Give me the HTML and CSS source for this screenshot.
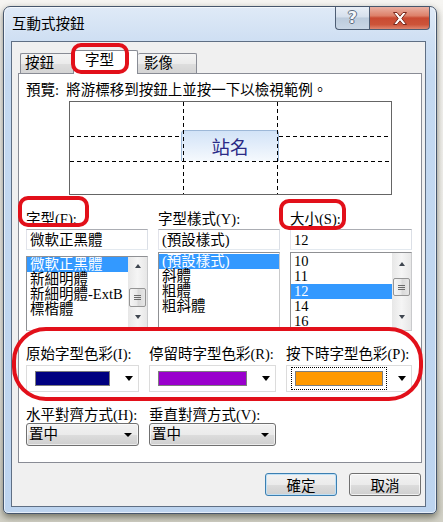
FILE: index.html
```html
<!DOCTYPE html>
<html lang="zh-Hant">
<head>
<meta charset="utf-8">
<title>互動式按鈕</title>
<link rel="stylesheet" href="styles.css">
</head>
<body>
<div class="window">
  <div class="titlebar">
    <span class="title">互動式按鈕</span>
    <div class="caps">
      <div class="cap cap-help"><span>?</span></div>
      <div class="cap cap-close">
        <svg width="16" height="13" viewBox="0 0 16 13"><polygon points="1.5,0.5 5,0.5 8,4.2 11,0.5 14.5,0.5 9.8,6.5 14.5,12.5 11,12.5 8,8.8 5,12.5 1.5,12.5 6.2,6.5" fill="#fff" stroke="#7a2a1e" stroke-width="1" stroke-linejoin="round"/></svg>
      </div>
    </div>
  </div>
  <div class="client">
    <div class="tabs">
      <div class="tab tab-1">按鈕</div>
      <div class="tab tab-2">字型</div>
      <div class="tab tab-3">影像</div>
    </div>
    <div class="panel">
      <div class="preview-text">預覽:&nbsp;&nbsp;將游標移到按鈕上並按一下以檢視範例。</div>
      <div class="preview">
        <div class="sample">站名</div>
        <svg class="guides" width="321" height="92" viewBox="0 0 321 92">
          <g stroke="#000" stroke-width="1" stroke-dasharray="4 3" fill="none">
            <line x1="113.5" y1="0" x2="113.5" y2="92"/>
            <line x1="207.5" y1="0" x2="207.5" y2="92"/>
            <line x1="0" y1="34.5" x2="111" y2="34.5"/>
            <line x1="209" y1="34.5" x2="321" y2="34.5"/>
            <line x1="0" y1="59.5" x2="321" y2="59.5"/>
          </g>
        </svg>
      </div>

      <div class="font-grid">
        <div class="field">
          <div class="lbl">字型(F):</div>
          <div class="tb">微軟正黑體</div>
          <div class="lb lb-font">
            <div class="items">
              <div class="item sel">微軟正黑體</div>
              <div class="item">新細明體</div>
              <div class="item">新細明體-ExtB</div>
              <div class="item">標楷體</div>
            </div>
            <div class="vscroll vs-font">
              <span class="arr arr-up"></span>
              <span class="thumb"></span>
              <span class="arr arr-down"></span>
            </div>
          </div>
        </div>
        <div class="field">
          <div class="lbl">字型樣式(Y):</div>
          <div class="tb">(預設樣式)</div>
          <div class="lb">
            <div class="items">
              <div class="item sel">(預設樣式)</div>
              <div class="item">斜體</div>
              <div class="item">粗體</div>
              <div class="item">粗斜體</div>
            </div>
          </div>
        </div>
        <div class="field">
          <div class="lbl">大小(S):</div>
          <div class="tb">12</div>
          <div class="lb">
            <div class="items">
              <div class="item">10</div>
              <div class="item">11</div>
              <div class="item sel">12</div>
              <div class="item">14</div>
              <div class="item">16</div>
            </div>
            <div class="vscroll vs-size">
              <span class="arr arr-up"></span>
              <span class="thumb"></span>
              <span class="arr arr-down"></span>
            </div>
          </div>
        </div>
      </div>

      <div class="color-grid">
        <div class="field">
          <div class="lbl">原始字型色彩(I):</div>
          <div class="ccombo"><span class="swatch sw-navy"></span><span class="dd-arrow"></span></div>
        </div>
        <div class="field">
          <div class="lbl">停留時字型色彩(R):</div>
          <div class="ccombo"><span class="swatch sw-purple"></span><span class="dd-arrow"></span></div>
        </div>
        <div class="field">
          <div class="lbl">按下時字型色彩(P):</div>
          <div class="ccombo"><span class="swatch sw-orange focus"></span><span class="dd-arrow"></span></div>
        </div>
      </div>

      <div class="align-grid">
        <div class="field">
          <div class="lbl">水平對齊方式(H):</div>
          <div class="dd"><span class="dd-text">置中</span><span class="dd-arrow small"></span></div>
        </div>
        <div class="field">
          <div class="lbl">垂直對齊方式(V):</div>
          <div class="dd"><span class="dd-text">置中</span><span class="dd-arrow small"></span></div>
        </div>
      </div>
    </div>
    <div class="btns">
      <div class="btn btn-default">確定</div>
      <div class="btn">取消</div>
    </div>
  </div>
</div>

<div class="mark mark-tab"></div>
<div class="mark mark-font"></div>
<div class="mark mark-size"></div>
<div class="mark mark-color"></div>
</body>
</html>
```

FILE: styles.css
```css
* { box-sizing: border-box; margin: 0; padding: 0; }
html, body { width: 443px; height: 522px; }
body {
  overflow: hidden;
  position: relative;
  background: linear-gradient(180deg, #f6f5f2 0%, #eeede8 70%, #d2d1c6 100%);
  font-family: "Liberation Serif", "Noto Sans CJK TC", serif;
  font-size: 14.5px;
  color: #000;
}

/* ---------- window frame ---------- */
.window {
  margin: 6px 0 0 3px;
  width: 434px;
  height: 508px;
  border: 1px solid #46566c;
  border-radius: 7px 7px 5px 5px;
  background: linear-gradient(180deg, #dfeaf7 0px, #d0e0f3 30px, #c4d9f1 70px, #bdd4ef 100%);
  box-shadow: 0 3px 7px rgba(50, 50, 35, .6), inset 0 0 0 1px rgba(255, 255, 255, .6);
  padding: 0 10px 6px 7px;
  display: flex;
  flex-direction: column;
}
.titlebar {
  height: 34px;
  margin: 0 -6px 0 -7px;
  display: flex;
  align-items: flex-start;
  flex: none;
}
.title {
  padding-left: 8px;
  line-height: 34px;
  white-space: nowrap;
}
.caps {
  margin-left: auto;
  margin-right: 2px;
  display: flex;
}
.cap {
  height: 23px;
  border: 1px solid #4e5e74;
  border-top: none;
  display: flex;
  align-items: center;
  justify-content: center;
}
.cap-help {
  width: 34px;
  border-right: none;
  border-radius: 0 0 0 4px;
  background: linear-gradient(180deg, #e9eff6 0%, #d6e0ec 45%, #bccbdc 50%, #cad7e6 100%);
}
.cap-help span {
  font-family: "DejaVu Sans", sans-serif;
  font-weight: bold;
  font-size: 16px;
  line-height: 16px;
  color: #f4f6f9;
  text-shadow: 1px 0 0 #5d6c80, -1px 0 0 #5d6c80, 0 1px 0 #5d6c80, 0 -1px 0 #5d6c80;
}
.cap-close {
  width: 61px;
  border-radius: 0 0 4px 0;
  background: linear-gradient(180deg, #eab0a2 0%, #dd8069 40%, #c94a32 50%, #cd5439 80%, #df8670 100%);
}

/* ---------- client ---------- */
.client {
  flex: 1;
  border: 1px solid #5f6f84;
  background: #f0f0f0;
  padding: 8px 3px 0 6px;
  display: flex;
  flex-direction: column;
}
.tabs {
  display: flex;
  align-items: flex-end;
  height: 23px;
  margin-left: 2px;
  position: relative;
  z-index: 1;
  flex: none;
}
.tab {
  height: 20px;
  border: 1px solid #898c95;
  border-bottom: none;
  border-radius: 2px 2px 0 0;
  background: linear-gradient(180deg, #f4f4f4 0%, #ebebeb 50%, #dedede 51%, #d4d4d4 100%);
  line-height: 19px;
  white-space: nowrap;
}
.tab-1 { width: 53px; padding-left: 4px; border-right: none; }
.tab-2 { width: 65px; height: 24px; margin-bottom: -1px; padding-left: 11px; background: #fff; }
.tab-3 { width: 59px; padding-left: 6px; border-left: none; }

.panel {
  height: 390px;
  border: 1px solid #898c95;
  background: #fff;
  padding: 8px 0 0 7px;
  flex: none;
}
.preview-text {
  height: 17px;
  line-height: 17px;
  white-space: nowrap;
}
.preview {
  position: relative;
  margin: 2px 0 0 43px;
  width: 323px;
  height: 94px;
  border: 1px solid #656565;
}
.guides { position: absolute; left: 0; top: 0; }
.sample {
  position: absolute;
  left: 111px;
  top: 28px;
  width: 98px;
  height: 31px;
  border: 1px solid #9db8d8;
  border-bottom: none;
  border-radius: 4px 4px 0 0;
  background: linear-gradient(180deg, #d2e3f7 0%, #e2edfa 45%, #f5f9fd 100%);
  text-align: center;
  font-size: 18.5px;
  line-height: 27px;
  padding-top: 4px;
  color: #2a2a86;
}

/* ---------- fields ---------- */
.field { display: flex; flex-direction: column; }
.lbl { height: 15px; line-height: 15px; white-space: nowrap; }

.font-grid {
  display: grid;
  grid-template-columns: 122px 122px 122px;
  column-gap: 10px;
  margin-top: 17px;
}
.tb {
  margin-top: 2px;
  height: 21px;
  border: 1px solid;
  border-color: #abadb3 #dbdfe6 #e3e9ef #e2e3ea;
  background: #fff;
  padding: 1px 0 0 3px;
  line-height: 19px;
  white-space: nowrap;
}
.lb {
  display: flex;
  height: 79px;
  margin-top: 2px;
  border: 1px solid;
  border-color: #8f9093 #c9cacc #c9cacc #8f9093;
  background: #fff;
  overflow: hidden;
}
.lb-font { height: 75px; margin-top: 6px; }
.items { flex: 1; padding-top: 1px; min-width: 0; }
.lb-font .items { padding-top: 0; }
.item {
  height: 15px;
  line-height: 15px;
  padding-left: 3px;
  white-space: nowrap;
}
.item.sel { background: #3399ff; color: #fff; }

.vscroll {
  width: 19px;
  flex: none;
  display: flex;
  flex-direction: column;
  align-items: center;
  background: linear-gradient(90deg, #e7e7e7, #f5f5f5 50%, #e7e7e7);
}
.arr {
  width: 0;
  height: 0;
  border-left: 3.5px solid transparent;
  border-right: 3.5px solid transparent;
}
.arr-up { border-bottom: 4px solid #3f4650; }
.arr-down { border-top: 4px solid #3f4650; margin-top: auto; margin-bottom: 11px; }
.thumb {
  width: 17px;
  border: 1px solid #959595;
  border-radius: 2px;
  background: linear-gradient(90deg, #f5f5f5, #e9e9e9 45%, #d9d9d9 55%, #e6e6e6);
  display: flex;
  align-items: center;
  justify-content: center;
}
.thumb::after {
  content: "";
  width: 7px;
  height: 1px;
  margin-top: -4px;
  background: #6a6a6a;
  box-shadow: 0 2px 0 #6a6a6a, 0 4px 0 #6a6a6a;
}
.vs-font .arr-up { margin-top: 7px; }
.vs-font .thumb { margin-top: 20px; height: 19px; }
.vs-size .arr-up { margin-top: 9px; }
.vs-size .thumb { margin-top: 12px; height: 18px; }

/* ---------- colour pickers ---------- */
.color-grid {
  display: grid;
  grid-template-columns: 113px 127px 126px;
  column-gap: 10px;
  margin-top: 16px;
}
.ccombo {
  margin-top: 3px;
  height: 27px;
  border: 1px solid #dcdcdc;
  background: #fff;
  display: flex;
  align-items: center;
  padding: 0 5px 0 8px;
}
.swatch {
  flex: 1;
  height: 15px;
  margin-right: 15px;
  border: 1px solid #7d7d7d;
}
.sw-navy { background: #000080; }
.sw-purple { background: #9900cc; }
.sw-orange { background: #ff9900; }
.swatch.focus { outline: 1px dotted #000; outline-offset: 3px; }
.dd-arrow {
  width: 0;
  height: 0;
  flex: none;
  border-left: 4.5px solid transparent;
  border-right: 4.5px solid transparent;
  border-top: 5px solid #000;
}
.dd-arrow.small {
  border-left-width: 4px;
  border-right-width: 4px;
  border-top-width: 4px;
}

/* ---------- alignment ---------- */
.align-grid {
  display: grid;
  grid-template-columns: 113px 127px;
  column-gap: 10px;
  margin-top: 16px;
}
.dd {
  height: 23px;
  border: 1px solid #707070;
  border-radius: 3px;
  background: linear-gradient(180deg, #f2f2f2 0%, #ebebeb 50%, #dddddd 51%, #cfcfcf 100%);
  box-shadow: inset 0 0 0 1px rgba(255, 255, 255, .6);
  display: flex;
  align-items: center;
  padding: 0 6px 0 2px;
}
.dd-text { flex: 1; line-height: 21px; }

/* ---------- dialog buttons ---------- */
.btns {
  display: flex;
  justify-content: flex-end;
  gap: 12px;
  margin: 10px 1px 0 0;
}
.btn {
  width: 72px;
  height: 23px;
  border: 1px solid #707070;
  border-radius: 3px;
  background: linear-gradient(180deg, #f2f2f2 0%, #ebebeb 50%, #dddddd 51%, #cfcfcf 100%);
  box-shadow: inset 0 0 0 1px rgba(255, 255, 255, .7);
  text-align: center;
  padding-top: 3px;
  line-height: 19px;
}
.btn-default {
  border-color: #3c7fb1;
  box-shadow: inset 0 0 0 1px #bfe0f6;
}

/* ---------- red annotation marks ---------- */
.mark {
  position: absolute;
  z-index: 10;
  border: 4px solid #e2101a;
  pointer-events: none;
}
.mark-tab { left: 71px; top: 43px; width: 58px; height: 31px; border-radius: 10px; }
.mark-font { left: 18px; top: 196px; width: 71px; height: 31px; border-radius: 10px; }
.mark-size { left: 279px; top: 199px; width: 67px; height: 31px; border-radius: 10px; }
.mark-color { left: 12px; top: 327px; width: 411px; height: 74px; border-radius: 34px; }
```
